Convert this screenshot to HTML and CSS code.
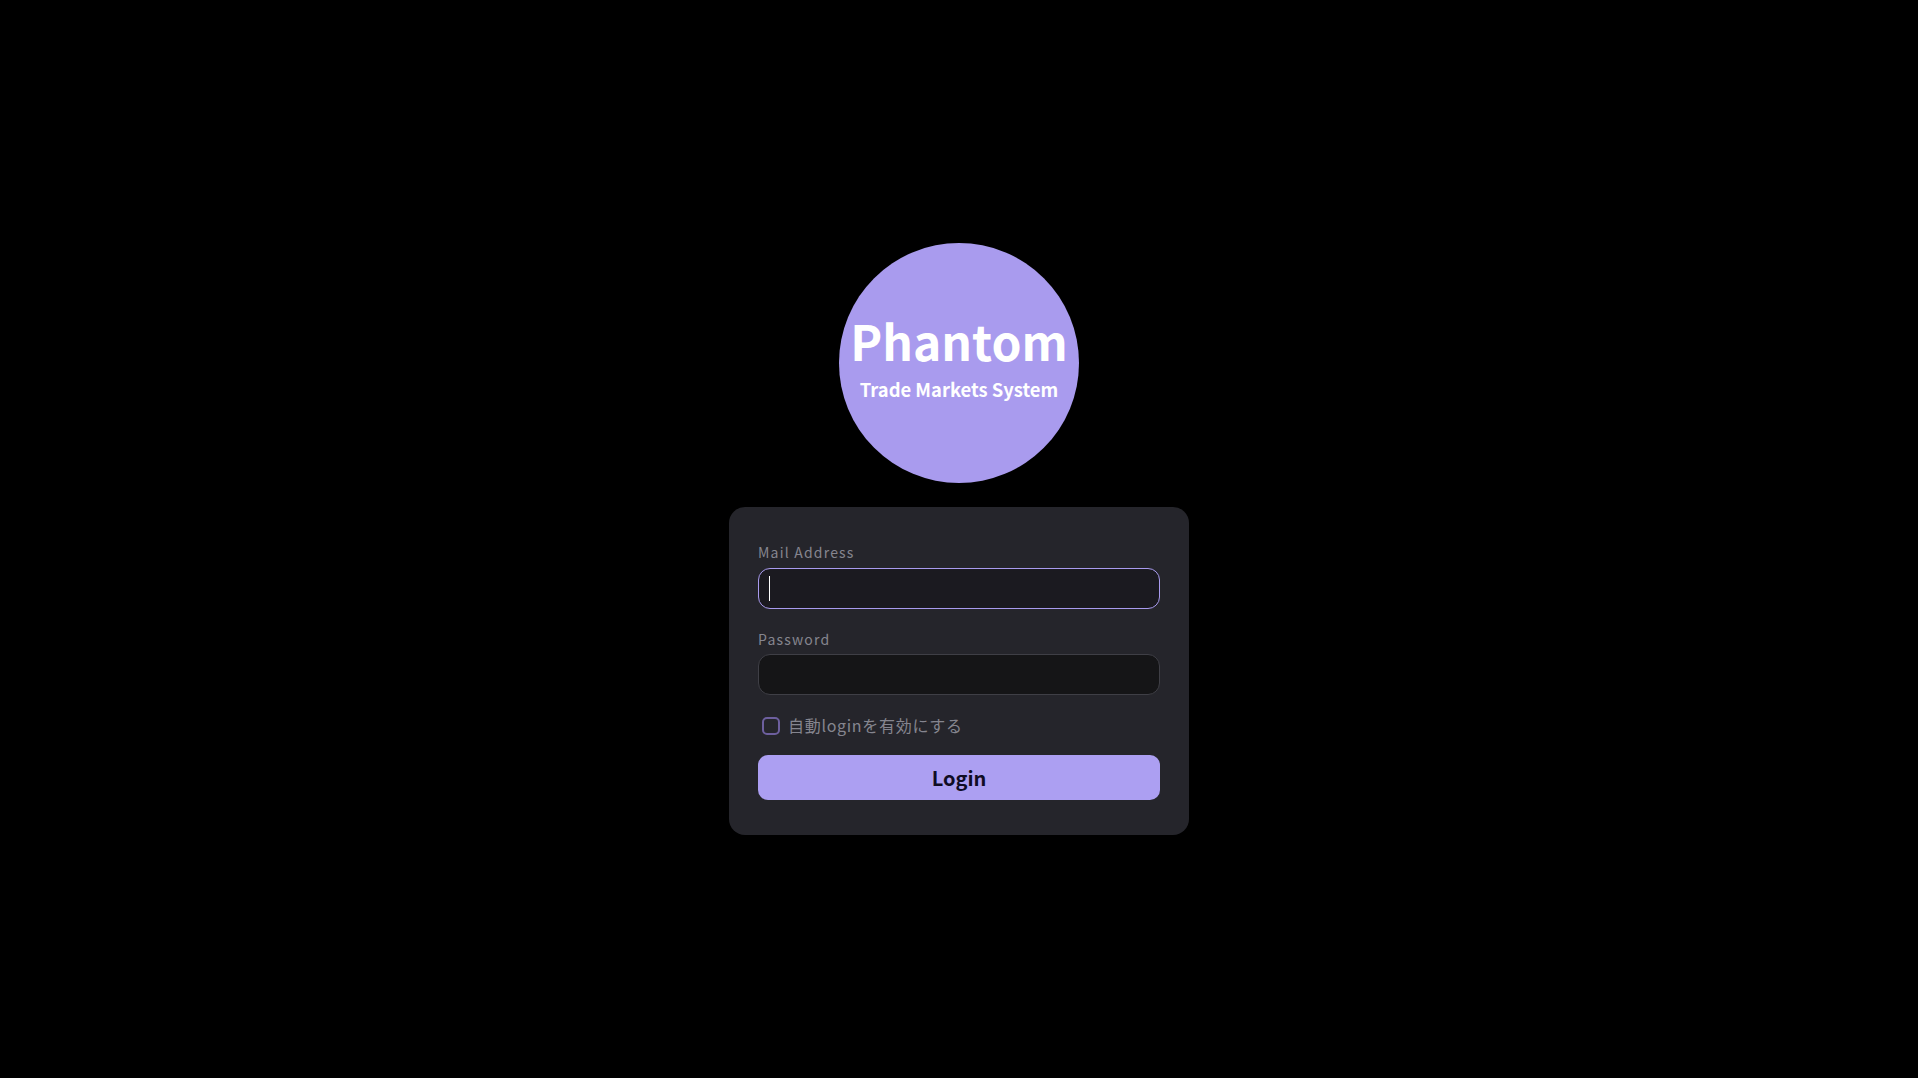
FILE: index.html
```html
<!DOCTYPE html>
<html lang="ja">
<head>
  <title>Phantom</title>
  <link rel="stylesheet" href="styles.css">
</head>
<body>
  <main class="login">
    <div class="logo">
      <div class="logo-name">Phantom</div>
      <div class="logo-sub">Trade Markets System</div>
    </div>
    <form class="card">
      <div class="field">
        <label class="field-label" for="mail">Mail Address</label>
        <div class="field-wrap">
          <input class="field-input" id="mail" type="text" autofocus>
          <span class="caret"></span>
        </div>
      </div>
      <div class="field">
        <label class="field-label" for="password">Password</label>
        <div class="field-wrap">
          <input class="field-input" id="password" type="password">
        </div>
      </div>
      <label class="remember">
        <input class="remember-box" type="checkbox">
        <span>自動loginを有効にする</span>
      </label>
      <button class="submit" type="button">Login</button>
    </form>
  </main>
</body>
</html>
```

FILE: styles.css
```css
* {
  box-sizing: border-box;
}

body {
  margin: 0;
  min-height: 100vh;
  background-color: #000;
  font-family: "Noto Sans CJK JP", "Noto Sans", sans-serif;
  display: flex;
  align-items: center;
  justify-content: center;
}

.login {
  display: flex;
  flex-direction: column;
  align-items: center;
  gap: 24px;
}

/* Logo */
.logo {
  width: 240px;
  height: 240px;
  border-radius: 50%;
  background-color: #a99bee;
  color: #fff;
  display: flex;
  flex-direction: column;
  align-items: center;
  padding-top: 73px;
}

.logo-name {
  font-size: 48px;
  font-weight: 700;
  line-height: 48px;
}

.logo-sub {
  font-size: 18.4px;
  font-weight: 700;
  line-height: 28px;
  margin-top: 11px;
}

/* Card */
.card {
  width: 460px;
  height: 328px;
  padding: 34.4px 29px 0;
  background-color: #25252b;
  border-radius: 16px;
  display: flex;
  flex-direction: column;
}

.field {
  display: flex;
  flex-direction: column;
  margin-bottom: 18.6px;
}

.field-label {
  color: #85858f;
  font-size: 14px;
  line-height: 22px;
  letter-spacing: 1.2px;
  margin-bottom: 4.6px;
}

.field-wrap {
  position: relative;
  display: flex;
  flex-direction: column;
}

.field-input {
  height: 41px;
  padding: 0 10px;
  background-color: #151517;
  border: 1px solid #3f3f46;
  border-radius: 12px;
  color: #fff;
  caret-color: transparent;
  font-size: 16px;
  outline: none;
}

.field-input:focus {
  border-color: #a99bee;
  background-color: #1b1a20;
}

.caret {
  position: absolute;
  left: 11px;
  top: 8px;
  width: 1px;
  height: 25px;
  background-color: #fff;
}

.remember {
  display: flex;
  align-items: center;
  gap: 8px;
  padding-left: 4px;
  color: #85858f;
  font-size: 16px;
  line-height: 23px;
  letter-spacing: 0.7px;
}

.remember-box {
  appearance: none;
  width: 18px;
  height: 18px;
  margin: 1px 0 0;
  border: 2px solid #6d5f9e;
  border-radius: 5px;
  background-color: transparent;
}

.submit {
  height: 45px;
  margin-top: 18.2px;
  background-color: #ac9ff2;
  border: none;
  border-radius: 10px;
  color: #100c24;
  font-family: inherit;
  font-size: 20px;
  font-weight: 700;
}
```
